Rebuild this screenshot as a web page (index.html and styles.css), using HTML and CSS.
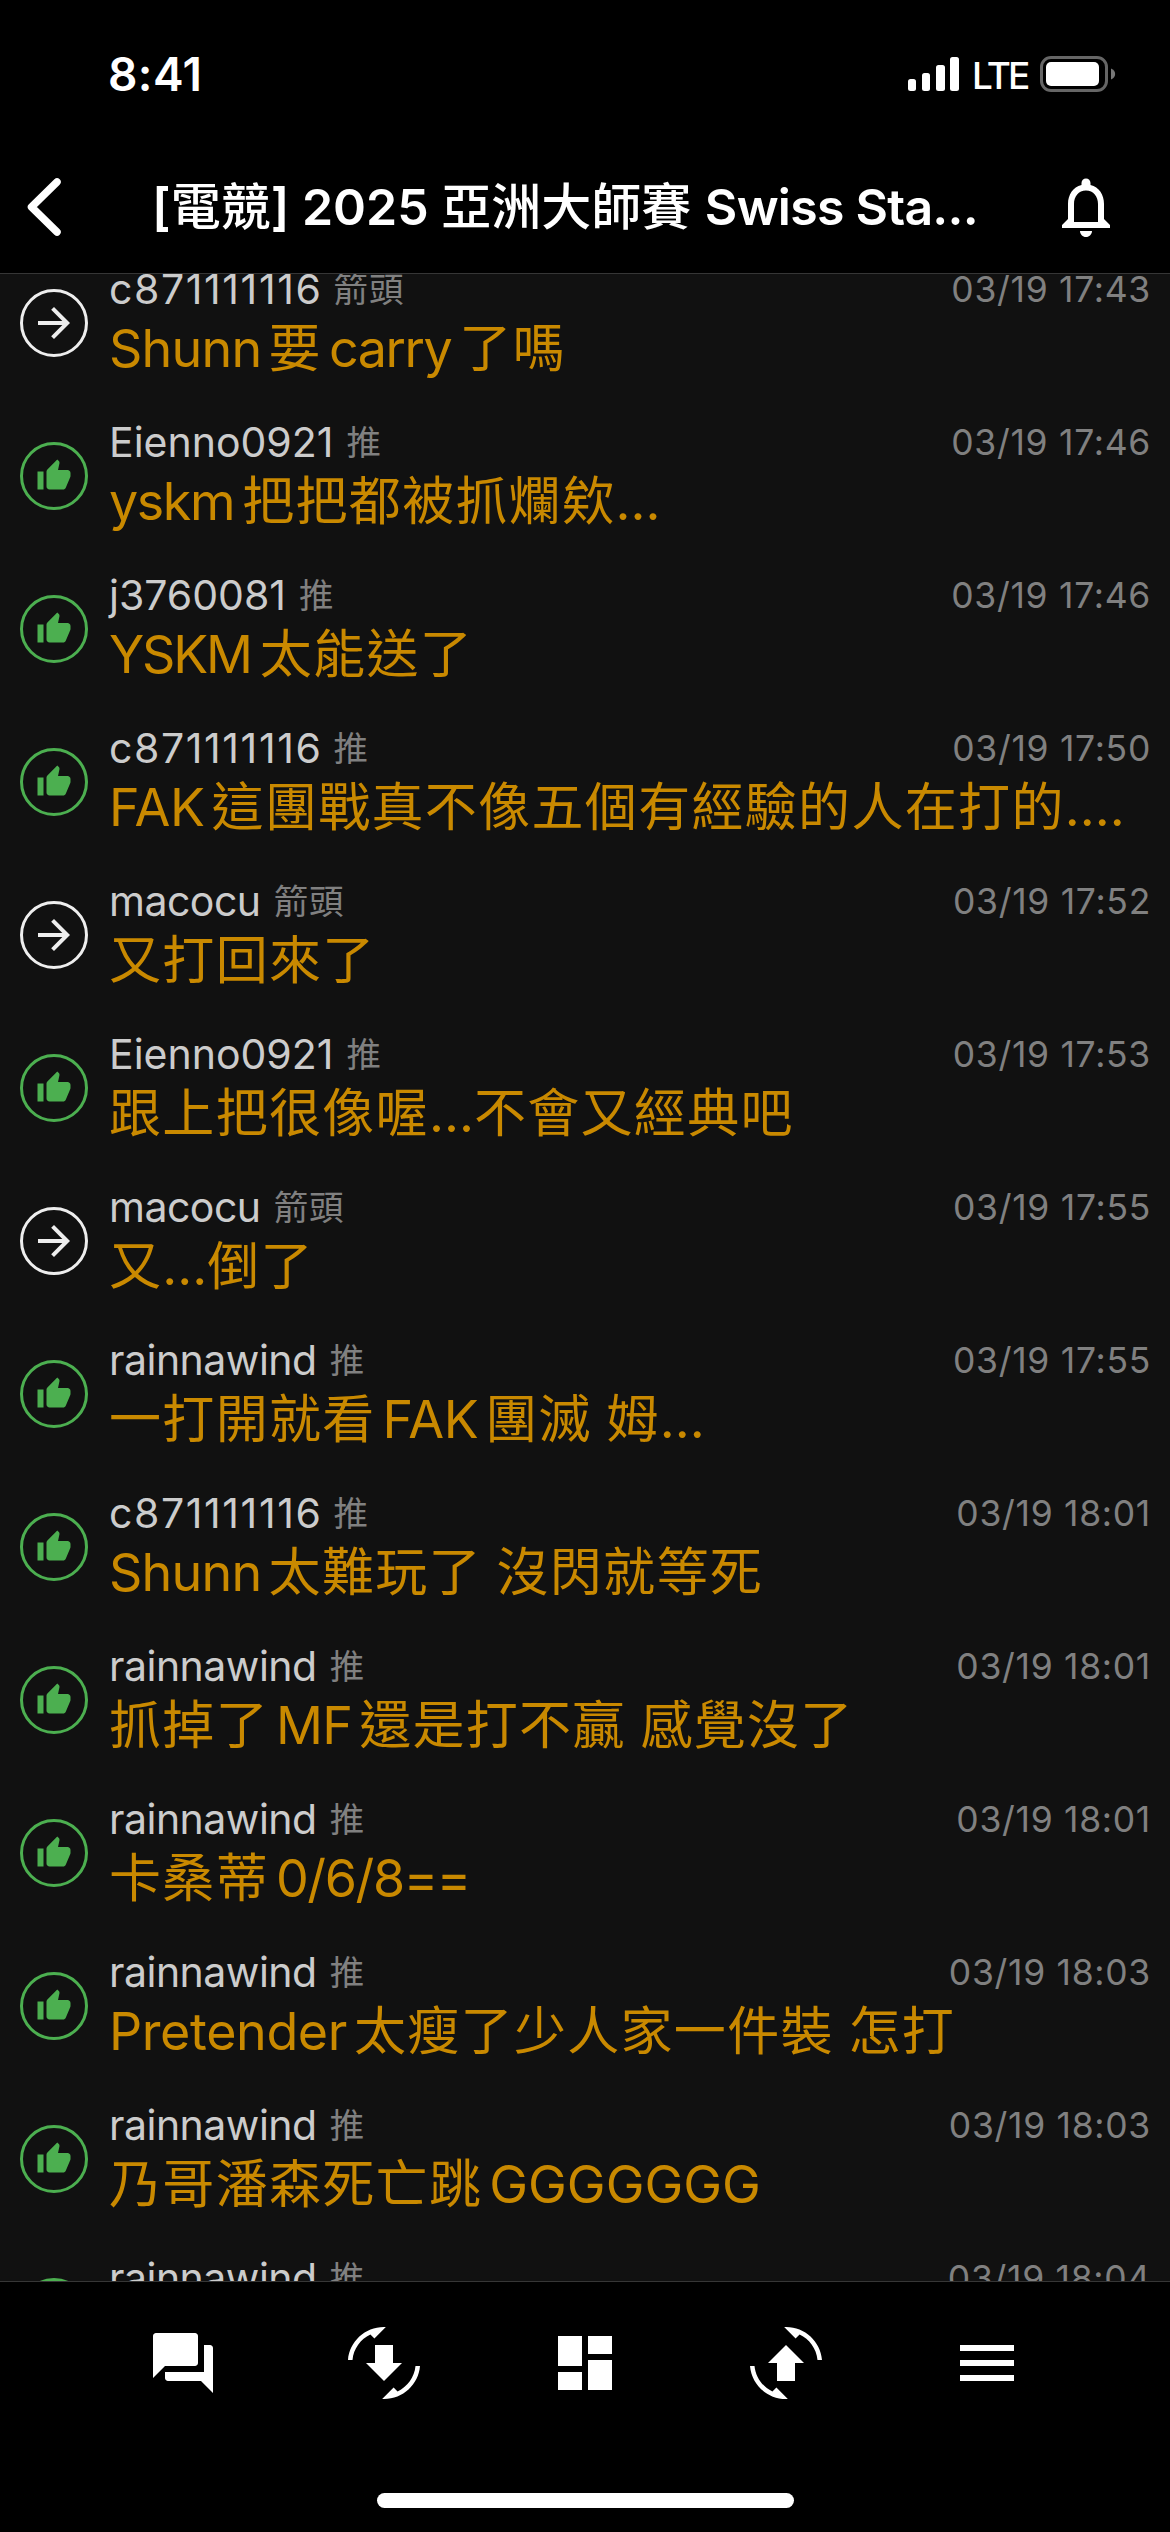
FILE: index.html
```html
<!DOCTYPE html>
<html lang="zh-Hant">
<head>
<meta charset="utf-8">
<title>[電競] 2025 亞洲大師賽</title>
<link rel="stylesheet" href="styles.css">
</head>
<body>
<svg class="defs" width="0" height="0">
  <symbol id="up" viewBox="0 0 24 24"><path d="M1 21h4V9H1v12zm22-11c0-1.1-.9-2-2-2h-6.31l.95-4.57.03-.32c0-.41-.17-.79-.44-1.06L14.17 1 7.59 7.59C7.22 7.95 7 8.45 7 9v10c0 1.1.9 2 2 2h9c.83 0 1.54-.5 1.84-1.22l3.02-7.05c.09-.23.14-.47.14-.73v-2z"/></symbol>
  <symbol id="arrow" viewBox="0 0 24 24"><path d="M12 4l-1.41 1.41L16.17 11H4v2h12.17l-5.58 5.59L12 20l8-8z"/></symbol>
  <symbol id="arcs" viewBox="0 0 24 24"><path d="M7.47 21.49C4.2 19.93 1.86 16.76 1.5 13H0c.51 6.16 5.66 11 11.95 11 .23 0 .44-.02.66-.03L8.8 20.15l-1.33 1.34zM12.05 0c-.23 0-.44.02-.66.04l3.81 3.81 1.33-1.33C19.8 4.07 22.14 7.24 22.5 11H24c-.51-6.16-5.66-11-11.95-11z"/></symbol>
</svg>
<div class="screen">
  <header class="status">
    <span class="clock">8:41</span>
    <div class="indicators">
      <svg class="signal" viewBox="0 0 51 34"><rect y="22" width="8" height="12" rx="2.5"/><rect x="14" y="16" width="8" height="18" rx="2.5"/><rect x="28" y="8" width="9" height="26" rx="2.5"/><rect x="42" width="9" height="34" rx="2.5"/></svg>
      <span class="network">LTE</span>
      <svg class="battery" viewBox="0 0 76 36"><rect class="shell" x="1.5" y="1.5" width="65" height="33" rx="9.5"/><rect x="6" y="6" width="53" height="24" rx="5"/><path class="nub" d="M71 12.5c5.5 2 5.5 9 0 11z"/></svg>
    </div>
  </header>
  <nav class="titlebar">
    <svg class="back" viewBox="0 0 34 58"><path d="M30 4L4.5 29 30 54"/></svg>
    <h1 class="title">[<b>電競</b>] 2025 <b>亞洲大師賽</b> <span class="stage">Swiss Sta...</span></h1>
    <svg class="bell" viewBox="0 0 24 24"><path d="M12 22c1.1 0 2-.9 2-2h-4c0 1.1.9 2 2 2zm6-6v-5c0-3.07-1.63-5.64-4.5-6.32V4c0-.83-.67-1.5-1.5-1.5s-1.5.67-1.5 1.5v.68C7.64 5.36 6 7.92 6 11v5l-2 2v1h16v-1l-2-2zm-2 1H8v-6c0-2.48 1.51-4.5 4-4.5s4 2.02 4 4.5v6z"/></svg>
  </nav>
  <main class="list">
    <article class="row arrow"><span class="badge"><svg><use href="#arrow"/></svg></span><div class="body"><div class="meta"><span class="user loose">c871111116</span><span class="tag">箭頭</span><time>03/19 17:43</time></div><p><span class="lat first snug">Shunn</span>要<span class="lat mid tight">carry</span>了嗎</p></div></article>
    <article class="row"><span class="badge"><svg><use href="#up"/></svg></span><div class="body"><div class="meta"><span class="user digits">Eienno0921</span><span class="tag">推</span><time>03/19 17:46</time></div><p><span class="lat first tight">yskm</span>把把都被抓爛欸<span class="lat">...</span></p></div></article>
    <article class="row"><span class="badge"><svg><use href="#up"/></svg></span><div class="body"><div class="meta"><span class="user digits">j3760081</span><span class="tag">推</span><time>03/19 17:46</time></div><p><span class="lat first tighter">YSKM</span>太能送了</p></div></article>
    <article class="row"><span class="badge"><svg><use href="#up"/></svg></span><div class="body"><div class="meta"><span class="user loose">c871111116</span><span class="tag">推</span><time>03/19 17:50</time></div><p><span class="lat first near">FAK</span>這團戰真不像五個有經驗的人在打的<span class="lat">....</span></p></div></article>
    <article class="row arrow"><span class="badge"><svg><use href="#arrow"/></svg></span><div class="body"><div class="meta"><span class="user">macocu</span><span class="tag">箭頭</span><time>03/19 17:52</time></div><p>又打回來了</p></div></article>
    <article class="row"><span class="badge"><svg><use href="#up"/></svg></span><div class="body"><div class="meta"><span class="user digits">Eienno0921</span><span class="tag">推</span><time>03/19 17:53</time></div><p>跟上把很像喔<span class="lat">...</span>不會又經典吧</p></div></article>
    <article class="row arrow"><span class="badge"><svg><use href="#arrow"/></svg></span><div class="body"><div class="meta"><span class="user">macocu</span><span class="tag">箭頭</span><time>03/19 17:55</time></div><p>又<span class="lat">...</span>倒了</p></div></article>
    <article class="row"><span class="badge"><svg><use href="#up"/></svg></span><div class="body"><div class="meta"><span class="user">rainnawind</span><span class="tag">推</span><time>03/19 17:55</time></div><p>一打開就看<span class="lat mid near">FAK</span>團滅<span class="lat"> </span>姆<span class="lat">...</span></p></div></article>
    <article class="row"><span class="badge"><svg><use href="#up"/></svg></span><div class="body"><div class="meta"><span class="user loose">c871111116</span><span class="tag">推</span><time>03/19 18:01</time></div><p><span class="lat first snug">Shunn</span>太難玩了<span class="lat"> </span>沒閃就等死</p></div></article>
    <article class="row"><span class="badge"><svg><use href="#up"/></svg></span><div class="body"><div class="meta"><span class="user">rainnawind</span><span class="tag">推</span><time>03/19 18:01</time></div><p>抓掉了<span class="lat mid snug">MF</span>還是打不贏<span class="lat"> </span>感覺沒了</p></div></article>
    <article class="row"><span class="badge"><svg><use href="#up"/></svg></span><div class="body"><div class="meta"><span class="user">rainnawind</span><span class="tag">推</span><time>03/19 18:01</time></div><p>卡桑蒂<span class="lat last tight">0/6/8==</span></p></div></article>
    <article class="row"><span class="badge"><svg><use href="#up"/></svg></span><div class="body"><div class="meta"><span class="user">rainnawind</span><span class="tag">推</span><time>03/19 18:03</time></div><p><span class="lat first near">Pretender</span>太瘦了少人家一件裝<span class="lat"> </span>怎打</p></div></article>
    <article class="row"><span class="badge"><svg><use href="#up"/></svg></span><div class="body"><div class="meta"><span class="user">rainnawind</span><span class="tag">推</span><time>03/19 18:03</time></div><p>乃哥潘森死亡跳<span class="lat last">GGGGGGG</span></p></div></article>
    <article class="row"><span class="badge"><svg><use href="#up"/></svg></span><div class="body"><div class="meta"><span class="user">rainnawind</span><span class="tag">推</span><time>03/19 18:04</time></div><p></p></div></article>
  </main>
  <footer class="toolbar">
    <div class="tools">
      <svg viewBox="0 0 24 24"><path d="M21 6h-2v9H6v2c0 .55.45 1 1 1h11l4 4V7c0-.55-.45-1-1-1zm-4 6V3c0-.55-.45-1-1-1H3c-.55 0-1 .45-1 1v14l4-4h10c.55 0 1-.45 1-1z"/></svg>
      <svg viewBox="0 0 24 24"><g transform="matrix(-1 0 0 1 24 0)"><use href="#arcs" width="24" height="24"/></g><path d="M9 6h6v6h3l-6 6-6-6h3z"/></svg>
      <svg viewBox="0 0 24 24"><path d="M3 13h8V3H3v10zm0 8h8v-6H3v6zm10 0h8V11h-8v10zm0-18v6h8V3h-8z"/></svg>
      <svg viewBox="0 0 24 24"><use href="#arcs" width="24" height="24"/><path d="M12 6l6 6h-3v6H9v-6H6z"/></svg>
      <svg viewBox="0 0 24 24"><path d="M3 18h18v-2H3v2zm0-5h18v-2H3v2zm0-7v2h18V6H3z"/></svg>
    </div>
    <div class="home"></div>
  </footer>
</div>
</body>
</html>
```

FILE: styles.css
```css
* { box-sizing: border-box; }
body {
  margin: 0;
  background: #000;
  color: #fff;
  font-family: Inter, "Noto Sans CJK TC", sans-serif;
  font-feature-settings: "calt" 0;
}
.defs { display: block; }
svg { display: block; fill: #fff; flex: none; }
.screen {
  width: 1170px;
  height: 2532px;
  display: flex;
  flex-direction: column;
  overflow: hidden;
}
.status {
  height: 141px;
  flex: none;
  display: flex;
  justify-content: space-between;
  padding: 0 54px 0 108px;
}
.clock {
  font-size: 46px;
  font-weight: 600;
  line-height: 56px;
  margin-top: 46px;
  letter-spacing: 0.4px;
}
.indicators { display: flex; margin-top: 56px; height: 36px; }
.signal { width: 51px; height: 34px; margin-top: 1px; }
.network {
  width: 52px;
  margin: 0 16px 0 13px;
  font-size: 37px;
  font-weight: 500;
  line-height: 40px;
  letter-spacing: -2.8px;
  white-space: nowrap;
}
.battery { width: 76px; height: 36px; }
.shell { fill: none; stroke: #666; stroke-width: 3; }
.nub { fill: #777; }
.titlebar {
  height: 133px;
  flex: none;
  display: flex;
  align-items: center;
  padding: 0 48px 1px 27px;
  border-bottom: 1px solid #363636;
}
.back { width: 34px; height: 58px; fill: none; stroke: #fff; stroke-width: 7.5; stroke-linecap: round; stroke-linejoin: round; }
.title {
  flex: 1;
  margin: 0 0 0 91px;
  font-size: 50px;
  font-weight: 600;
  line-height: 66px;
  letter-spacing: 0;
  white-space: nowrap;
}
.title b { font-weight: 500; }
.stage { letter-spacing: -0.75px; margin-left: 1px; }
.bell { width: 72px; height: 72px; }
.list { flex: 1; min-height: 0; overflow: hidden; background: #111; }
.row {
  height: 153px;
  display: flex;
  align-items: center;
  gap: 21px;
  padding: 0 20px;
}
.row:first-child { margin-top: -28px; }
.badge {
  flex: none;
  width: 68px;
  height: 68px;
  display: grid;
  place-items: center;
  border: 3px solid #4caf50;
  border-radius: 50%;
}
.badge svg { width: 36px; height: 36px; fill: #4caf50; }
.arrow .badge { border-color: #eee; }
.arrow .badge svg { width: 48px; height: 48px; fill: #eee; }
.body { flex: 1; min-width: 0; height: 122px; }
.meta { display: flex; align-items: center; height: 54px; line-height: 54px; white-space: nowrap; }
.user { font-size: 41px; color: #ccc; letter-spacing: -0.5px; }
.user.loose { letter-spacing: 1.6px; }
.user.digits { letter-spacing: 0; }
.tag { font-size: 34.5px; letter-spacing: 1px; margin: 0 0 3px 13px; color: #808080; font-family: "Noto Sans CJK TC", sans-serif; }
.loose + .tag { margin-left: 11px; }
time { margin: 3px -1px 0 auto; font-size: 35.5px; letter-spacing: 0.7px; color: #808080; }
p { margin: 0; height: 57px; line-height: 57px; white-space: pre; color: #c98900; font-family: "Noto Sans CJK TC", sans-serif; font-size: 52px; letter-spacing: 1.32px; }
.lat { font-family: Inter, sans-serif; font-size: 52px; letter-spacing: 0; }
.near { letter-spacing: -0.4px; }
.snug { letter-spacing: -0.75px; }
.tight { letter-spacing: -1.4px; }
.tighter { letter-spacing: -2.2px; }
.first { margin-right: 7px; }
.mid { margin: 0 7px; }
.last { margin-left: 7px; }
.tight.first, .tight.mid { margin-right: 8px; }
.tighter.first { margin-right: 9px; }
.toolbar {
  height: 251px;
  flex: none;
  display: flex;
  flex-direction: column;
  align-items: center;
  justify-content: space-between;
  padding: 45px 0 24px;
  border-top: 1px solid #363636;
}
.tools { display: flex; gap: 129px; }
.tools svg { width: 72px; height: 72px; }
.home { width: 417px; height: 15px; border-radius: 8px; background: #fff; }
```
